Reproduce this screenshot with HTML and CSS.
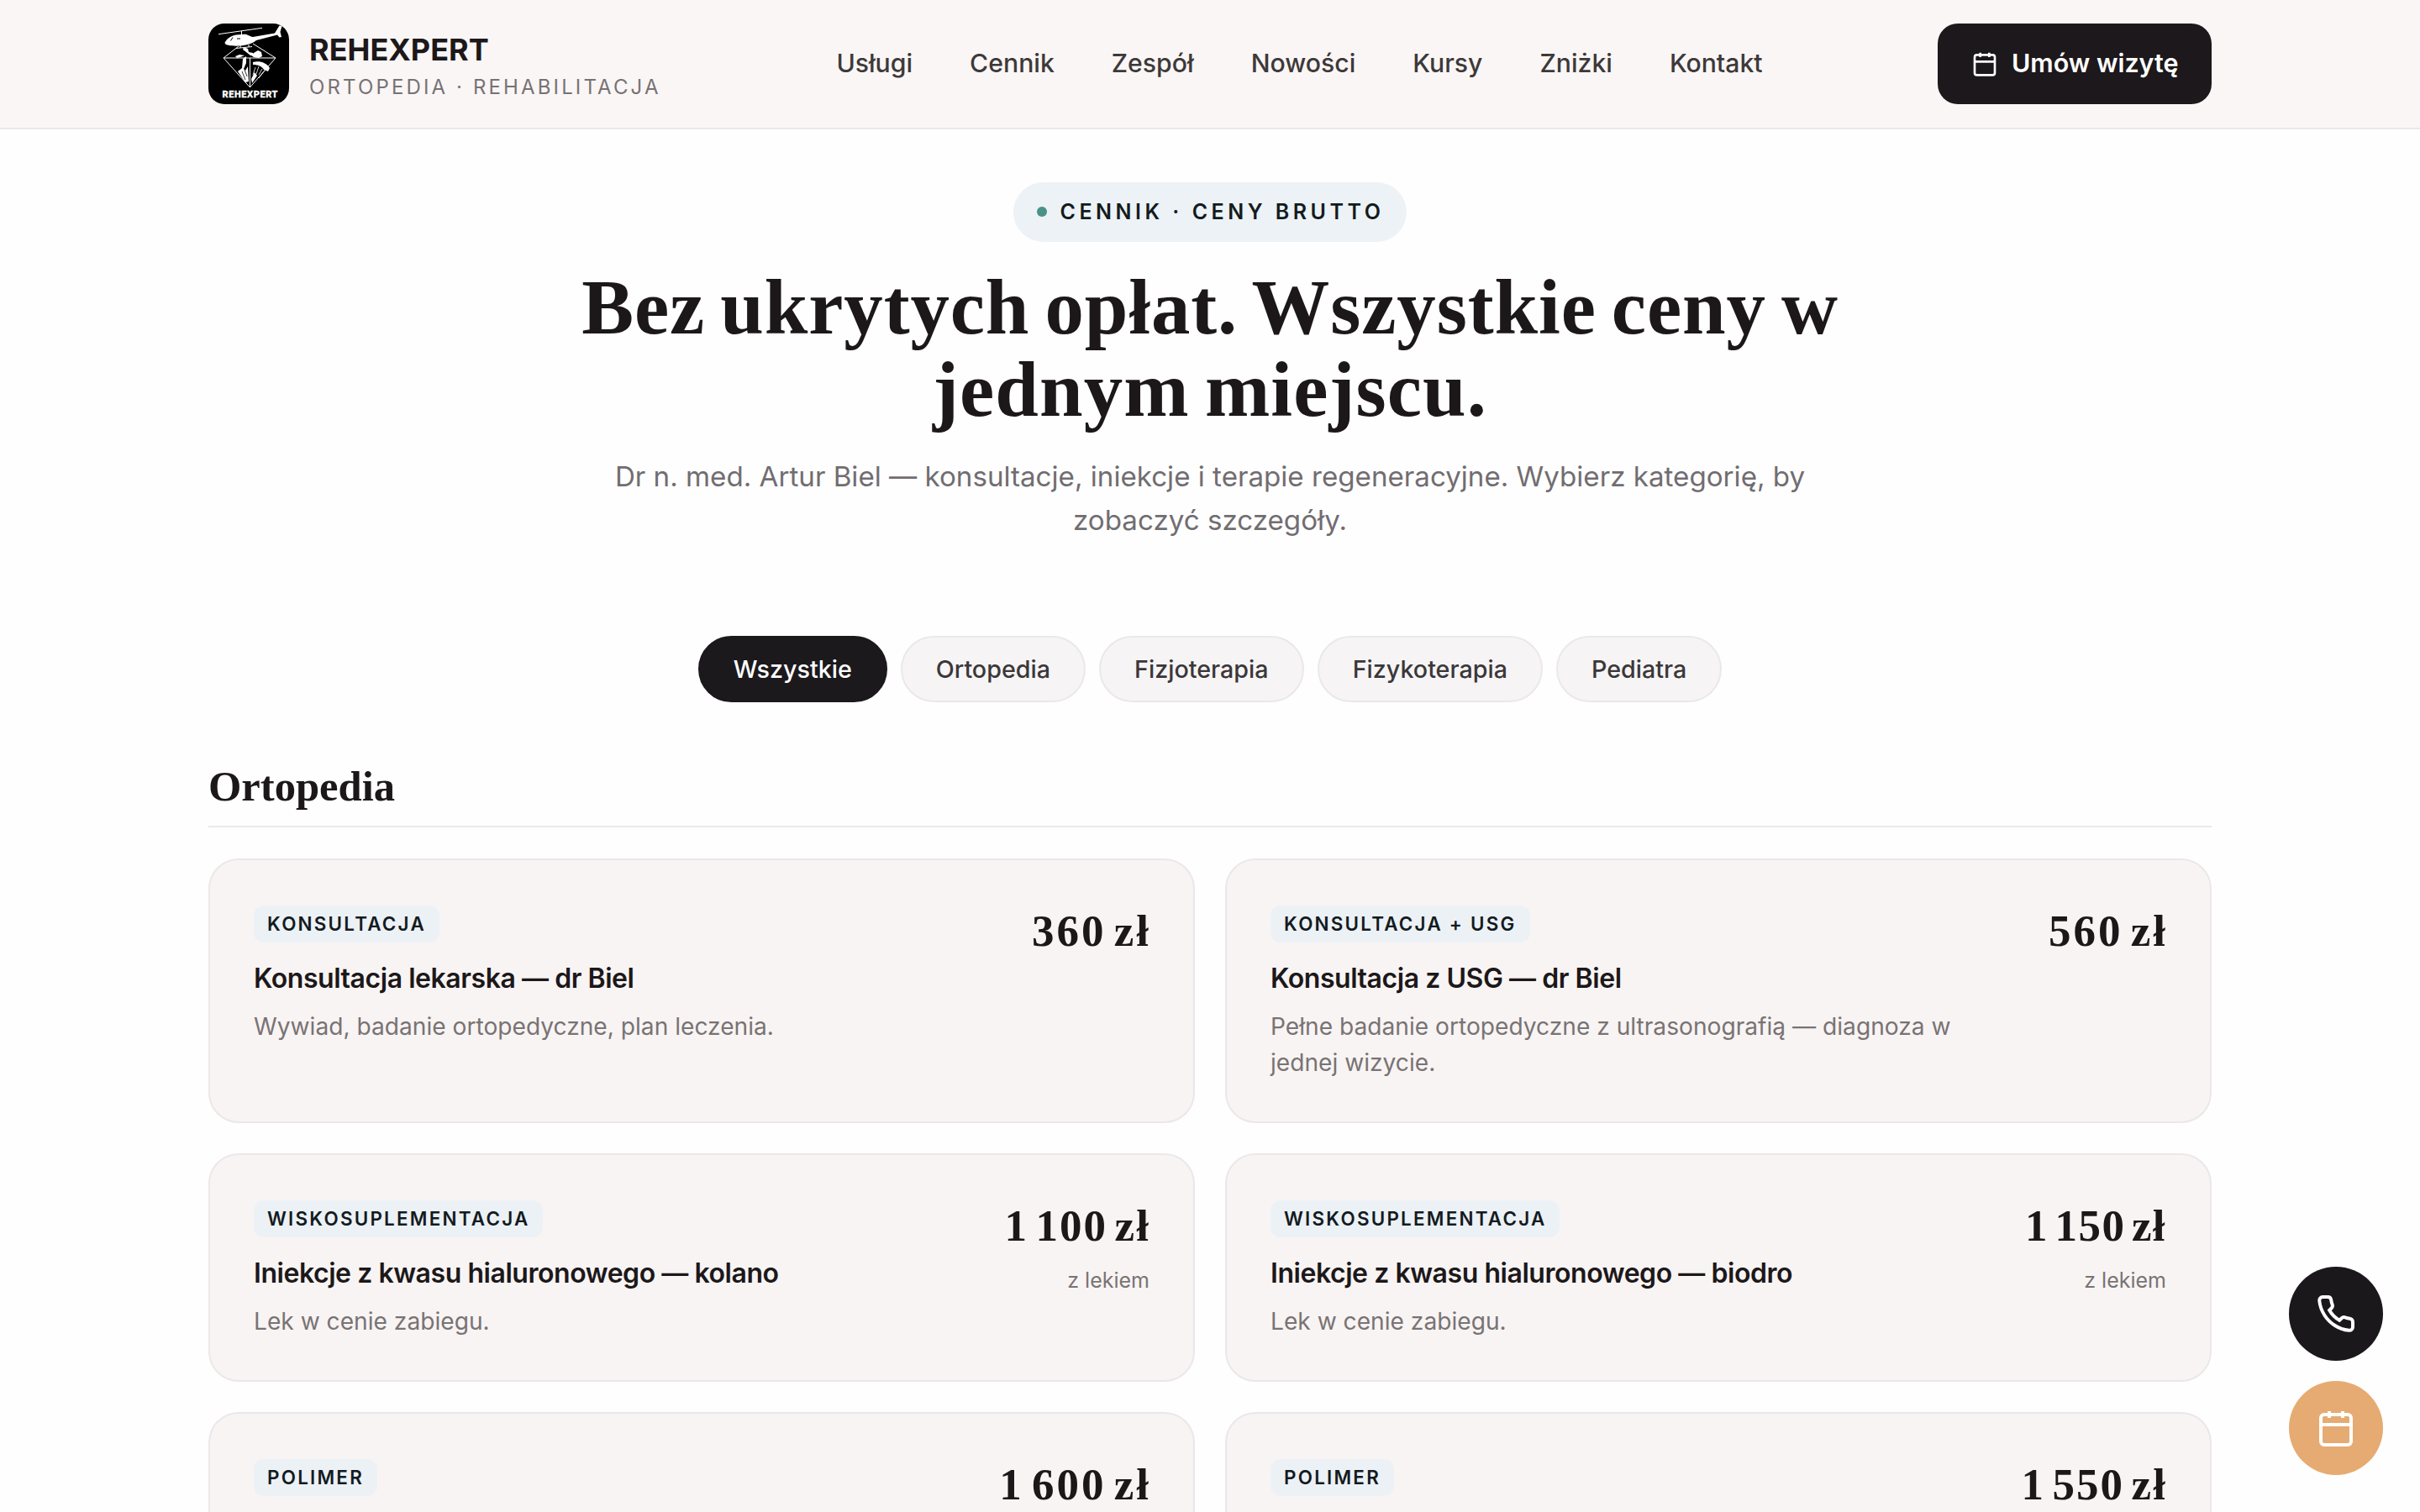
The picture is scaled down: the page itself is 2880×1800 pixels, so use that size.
FILE: index.html
```html
<!DOCTYPE html>
<html lang="pl">
<head>
<meta charset="utf-8">
<title>REHEXPERT – Cennik</title>
<link rel="stylesheet" href="styles.css">
</head>
<body>
<header class="site-header">
  <div class="container header-row">
    <a class="brand">
      <svg class="brand-logo" viewBox="0 0 96 96" aria-hidden="true">
        <rect width="96" height="96" rx="19" fill="#000"/>
        <g fill="none" stroke="#fff" stroke-width="1">
          <path d="M36 27 18 41 49.5 76 80 41 53 24M18 41H80M49.5 41V76"/>
          <path d="M12 12.7 64 5.3M39.500 9V14M33 29.500 52 27.500M38 26V29M48 25V28"/>
        </g>
        <g fill="#fff">
          <path d="M19.500 23C21 19 27 14 33 13.500L43 12.800C47 12.800 49 15.500 53 16L79 11.500 84.500 2.500 87.500 3 85.500 10 87 16 84.500 16.500 82 13.500 57 20C52 24 45 26 38 26.500 30 27 20 26.500 19.500 23Z"/>
          <path d="M42 28 47 30 48 34 53 35 54 38 50 38 45 34 41 31Z"/>
          <path d="M54 35 59 32 63 34 64 39 60 41 54 40 51 38Z"/>
          <path d="M53 46C60 44 69 46 73 53L71 57 66 55C64 51 59 49 53 49Z"/>
          <path d="M41 42 45 39 45 47 42 54 44 56 47 51 48 69 44 70 35 57 40 53Z"/>
          <path d="M51 66 55 58 58 62 52 71Z"/>
          <path d="M32 39 37 37 43 38 38 40 34 41Z"/>
        </g>
        <g fill="none" stroke="#fff" stroke-width=".8">
          <path d="M56 52 53 61M60 51 57 60M64 54 60 61M67 56 60 65"/>
          <path d="M40 57 44 67M43 55 46 63" stroke="#000"/>
        </g>
        <path d="M29 16.500 26.500 20.500M34 18h4" stroke="#000" fill="none"/>
        <text class="logo-text" x="16.500" y="88" textLength="66" lengthAdjust="spacing">REHEXPERT</text>
      </svg>
      <span class="brand-text">
        <span class="brand-name">REHEXPERT</span>
        <span class="brand-sub">ORTOPEDIA · REHABILITACJA</span>
      </span>
    </a>
    <nav class="nav">
      <a>Usługi</a><a>Cennik</a><a>Zespół</a><a>Nowości</a><a>Kursy</a><a>Zniżki</a><a>Kontakt</a>
    </nav>
    <a class="book-btn">
      <svg class="icon-sm" viewBox="0 0 24 24" aria-hidden="true"><rect x="3" y="4" width="18" height="18" rx="2"/><path d="M16 2v4M8 2v4M3 10h18"/></svg>
      Umów wizytę
    </a>
  </div>
</header>

<main class="container">
  <section class="hero">
    <span class="eyebrow"><i class="dot"></i>CENNIK · CENY BRUTTO</span>
    <h1>Bez ukrytych opłat. Wszystkie ceny w<br><span class="h1-second">jednym miejscu.</span></h1>
    <p>Dr n. med. Artur Biel — konsultacje, iniekcje i terapie regeneracyjne. Wybierz kategorię, by<br>zobaczyć szczegóły.</p>
  </section>

  <div class="chips">
    <button class="chip chip--active">Wszystkie</button>
    <button class="chip">Ortopedia</button>
    <button class="chip">Fizjoterapia</button>
    <button class="chip">Fizykoterapia</button>
    <button class="chip">Pediatra</button>
  </div>

  <section>
    <h2>Ortopedia</h2>
    <div class="grid">
      <article class="card">
        <div class="card-main">
          <span class="tag">KONSULTACJA</span>
          <h3>Konsultacja lekarska — dr Biel</h3>
          <p>Wywiad, badanie ortopedyczne, plan leczenia.</p>
        </div>
        <div class="card-price"><strong>360 zł</strong></div>
      </article>
      <article class="card">
        <div class="card-main">
          <span class="tag">KONSULTACJA + USG</span>
          <h3>Konsultacja z USG — dr Biel</h3>
          <p>Pełne badanie ortopedyczne z ultrasonografią — diagnoza w jednej wizycie.</p>
        </div>
        <div class="card-price"><strong>560 zł</strong></div>
      </article>
      <article class="card">
        <div class="card-main">
          <span class="tag">WISKOSUPLEMENTACJA</span>
          <h3>Iniekcje z kwasu hialuronowego — kolano</h3>
          <p>Lek w cenie zabiegu.</p>
        </div>
        <div class="card-price"><strong class="snug">1 100 zł</strong><small>z lekiem</small></div>
      </article>
      <article class="card">
        <div class="card-main">
          <span class="tag">WISKOSUPLEMENTACJA</span>
          <h3>Iniekcje z kwasu hialuronowego — biodro</h3>
          <p>Lek w cenie zabiegu.</p>
        </div>
        <div class="card-price"><strong class="tight">1 150 zł</strong><small>z lekiem</small></div>
      </article>
      <article class="card card--last">
        <div class="card-main"><span class="tag">POLIMER</span></div>
        <div class="card-price"><strong>1 600 zł</strong></div>
      </article>
      <article class="card card--last">
        <div class="card-main"><span class="tag">POLIMER</span></div>
        <div class="card-price"><strong class="snug">1 550 zł</strong></div>
      </article>
    </div>
  </section>
</main>

<div class="fabs">
  <a class="fab fab--phone"><svg viewBox="0 0 24 24" aria-hidden="true"><path d="M22 16.920v3a2 2 0 0 1-2.180 2 19.790 19.790 0 0 1-8.630-3.070 19.500 19.500 0 0 1-6-6 19.790 19.790 0 0 1-3.070-8.670A2 2 0 0 1 4.110 2h3a2 2 0 0 1 2 1.720c.127.960.361 1.903.7 2.810a2 2 0 0 1-.450 2.110L8.090 9.910a16 16 0 0 0 6 6l1.270-1.270a2 2 0 0 1 2.110-.450c.907.339 1.850.573 2.810.7A2 2 0 0 1 22 16.920z"/></svg></a>
  <a class="fab fab--book"><svg viewBox="0 0 24 24" aria-hidden="true"><rect x="3" y="4" width="18" height="18" rx="2"/><path d="M16 2v4M8 2v4M3 10h18"/></svg></a>
</div>
</body>
</html>
```
FILE: styles.css
```css
* { box-sizing: border-box; }

html, body { margin: 0; height: 1800px; overflow: hidden; }

body {
  background: #fefefe;
  color: #1c181a;
  font-family: Inter, "Liberation Sans", sans-serif;
}

h1, h2, h3, p { margin: 0; }

.container { width: 2384px; margin: 0 auto; }

/* Header */
.site-header {
  height: 154px;
  background: #faf6f5;
  border-bottom: 2px solid #ebe7e9;
}

.header-row {
  height: 152px;
  display: flex;
  align-items: center;
  justify-content: space-between;
}

.brand { display: flex; align-items: center; gap: 24px; width: 560px; }
.brand-logo { width: 96px; height: 96px; flex: none; }
.logo-text { font: 800 11px Roboto, sans-serif; fill: #fff; stroke: #fff; stroke-width: .3px; }

.brand-text { display: flex; flex-direction: column; gap: 8px; padding-top: 8px; white-space: nowrap; }
.brand-name { font-size: 36px; line-height: 40px; font-weight: 700; }
.brand-sub { font-size: 24px; line-height: 34px; letter-spacing: 3.13px; color: #777274; }

.nav {
  display: flex;
  gap: 68px;
  padding-bottom: 2px;
  font-size: 30.2px;
  line-height: 40px;
  font-weight: 500;
  color: #3d393a;
  margin-right: 21px;
}

.book-btn {
  display: flex;
  align-items: center;
  gap: 16px;
  height: 96px;
  width: 326px;
  padding: 0 0 2px 40px;
  border-radius: 24px;
  background: #1c181b;
  color: #fff;
  font-size: 30.400px;
  font-weight: 600;
  white-space: nowrap;
}

svg.icon-sm, .fab svg { fill: none; stroke: currentColor; stroke-width: 2; }
svg.icon-sm { width: 32px; height: 32px; flex: none; position: relative; top: 1px; }

/* Hero */
.hero { display: flex; flex-direction: column; align-items: center; text-align: center; padding-top: 63px; }

.eyebrow {
  display: flex;
  align-items: center;
  gap: 16px;
  height: 71px;
  padding: 0 27px 2px 28px;
  border-radius: 36px;
  background: #ecf2f5;
  color: #131b20;
  font-size: 25px;
  font-weight: 600;
  letter-spacing: 4.500px;
}

.dot { width: 12px; height: 12px; border-radius: 50%; background: #4a9189; }

h1, h2, .card-price strong { font-family: "Liberation Serif", serif; font-weight: 700; }

h1 {
  margin-top: 29px;
  font-size: 92.8px;
  line-height: 98px;
  letter-spacing: .9px;
  word-spacing: -6px;
  white-space: nowrap;
}
.h1-second { letter-spacing: 1.100px; }

.hero p { margin-top: 28px; font-size: 33.15px; line-height: 52px; color: #716d71; white-space: nowrap; }

/* Category filter */
.chips { display: flex; justify-content: center; gap: 16px; margin-top: 112px; }

.chip {
  height: 79px;
  padding: 0 40px;
  border: 2px solid #eae8ec;
  border-radius: 40px;
  background: #f6f4f5;
  color: #3b3739;
  font: 500 28.7px Inter, sans-serif;
}

.chip--active { background: #1c191d; border-color: #1c191d; color: #fff; }

/* Price list */
h2 {
  margin-top: 70px;
  padding-bottom: 17px;
  border-bottom: 2px solid #ebe9ec;
  font-size: 50.600px;
  line-height: 60px;
}

.grid { display: grid; grid-template-columns: 1fr 1fr; gap: 36px; margin-top: 37px; }

.card {
  display: flex;
  justify-content: space-between;
  padding: 54px 52px 48px;
  border: 2px solid #ebe7ea;
  border-radius: 36px;
  background: #f8f4f3;
}

/* The last visible row is cut by the bottom of the viewport. */
.card--last { height: 119px; border-bottom: 0; border-radius: 36px 36px 0 0; padding-bottom: 0; }

.tag {
  display: inline-block;
  height: 44px;
  padding: 0 16px;
  border-radius: 12px;
  background: #ecf1f6;
  color: #131b20;
  font-size: 22.400px;
  line-height: 44px;
  font-weight: 600;
  letter-spacing: 2.240px;
  vertical-align: top;
}

h3 { margin-top: 21px; font-size: 32px; line-height: 44px; font-weight: 600; letter-spacing: -.450px; }
.card p { max-width: 860px; margin-top: 14px; font-size: 28.150px; line-height: 43px; color: #787374; }

.card-price { display: flex; flex-direction: column; align-items: flex-end; padding-top: 2px; white-space: nowrap; }
.card-price strong { font-size: 53px; line-height: 56px; letter-spacing: 3px; word-spacing: -7px; margin-right: -2px; }
.card-price .snug { letter-spacing: 2.100px; margin-right: -1px; }
.card-price .tight { letter-spacing: 1.400px; margin-right: 0; }
.card-price small { margin-top: 19px; font-size: 25px; line-height: 36px; color: #787374; }

/* Floating actions */
.fabs { position: fixed; right: 44px; bottom: 44px; display: flex; flex-direction: column; gap: 24px; }

.fab {
  display: flex;
  align-items: center;
  justify-content: center;
  width: 112px;
  height: 112px;
  border-radius: 50%;
  color: #fff;
}

.fab svg { width: 48px; height: 48px; }
.fab--phone { background: #1b181b; }
.fab--book { background: #e6ab72; }
```
